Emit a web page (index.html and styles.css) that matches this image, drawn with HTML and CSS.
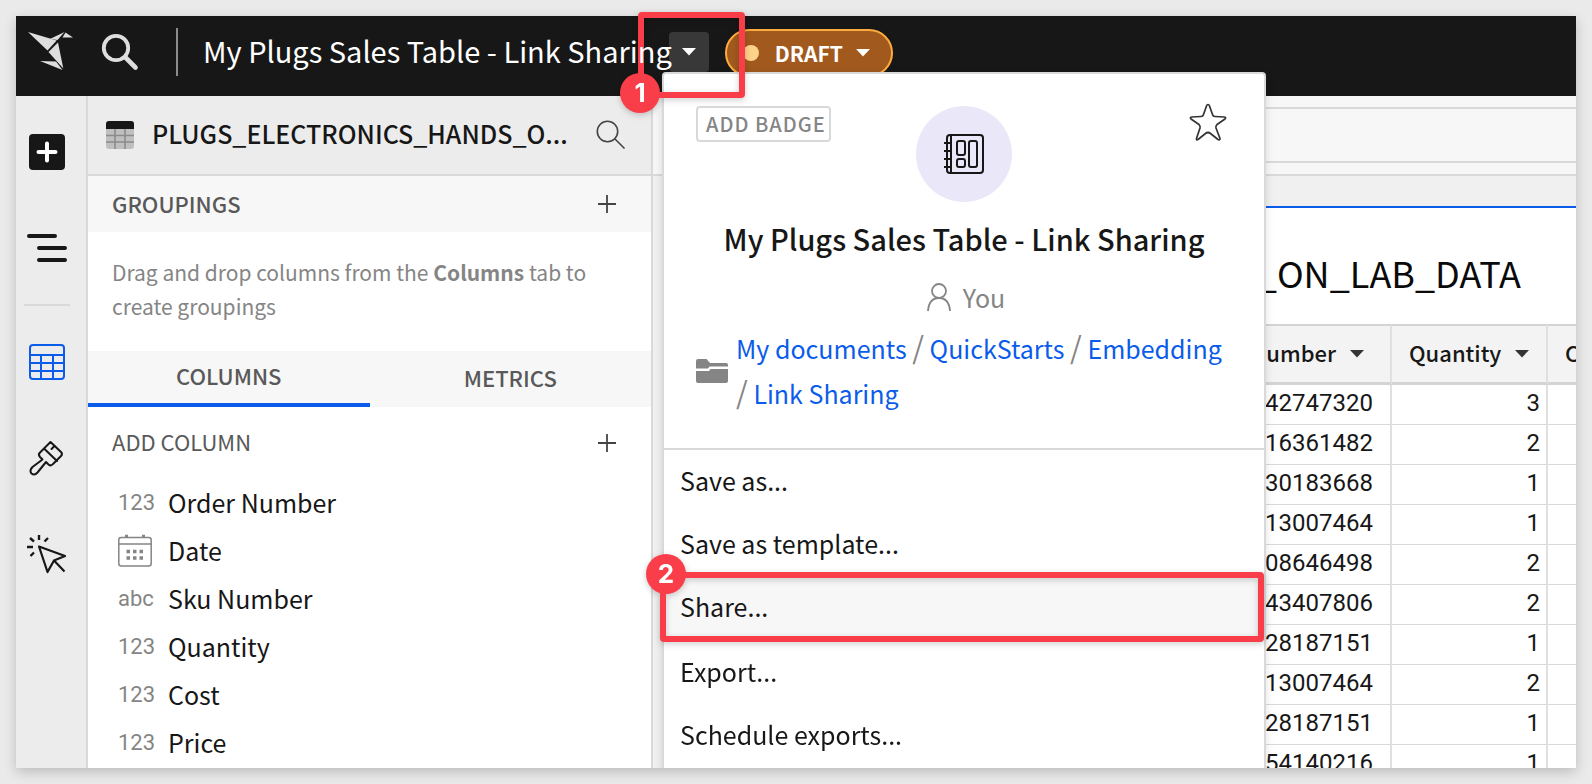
FILE: index.html
```html
<!DOCTYPE html>
<html lang="en">
<head>
<meta charset="utf-8">
<title>My Plugs Sales Table - Link Sharing</title>
<link rel="stylesheet" href="styles.css">
</head>
<body>
<div class="frame">
  <div class="app">
    <header class="topbar">
      <a class="logo" href="#" aria-label="Home">
        <svg width="46" height="40" viewBox="0 0 46 40" fill="#dedede"><path d="M0 0 28.700 8.500 19.500 18.500Z"/><path d="M22 7 36.500 0 29.500 8Z"/><path d="M37.500 .5 45 5.500 34.500 5.500Z"/><path d="M30 10.500 35.300 36.500 20.500 20Z"/><path d="M12 29 28 29.500 34.500 38Z"/></svg>
      </a>
      <button class="icon-button top-search" aria-label="Search">
        <svg width="38" height="38" viewBox="0 0 38 38" fill="none" stroke="#dedede"><circle cx="15" cy="15" r="12.200" stroke-width="3.800"/><path d="m24.500 24.500 10 10" stroke-width="4.600" stroke-linecap="round"/></svg>
      </button>
      <span class="top-divider"></span>
      <span class="doc-name">My Plugs Sales Table - Link Sharing</span>
      <button class="icon-button doc-caret" aria-label="Document menu">
        <svg width="14" height="8" viewBox="0 0 14 8"><path d="M0 0h14L7 7.500z" fill="#fff"/></svg>
      </button>
      <button class="draft"><span class="draft-dot"></span>DRAFT
        <svg width="14" height="8" viewBox="0 0 14 8"><path d="M0 0h14L7 7.500z" fill="#fff"/></svg>
      </button>
    </header>

    <div class="workspace">
      <nav class="rail">
        <button class="icon-button rail-item" aria-label="Add element">
          <svg width="36" height="36" viewBox="0 0 36 36"><rect width="36" height="36" rx="4" fill="#171717"/><path d="M18 9.500v17M9.500 18h17" stroke="#fff" stroke-width="4" stroke-linecap="round"/></svg>
        </button>
        <button class="icon-button rail-item" aria-label="Outline">
          <svg width="40" height="28" viewBox="0 0 40 28" stroke="#171717" stroke-width="4" stroke-linecap="round"><path d="M2 2h26M12 14h26M12 26h26"/></svg>
        </button>
        <span class="rail-divider"></span>
        <button class="icon-button rail-item" aria-label="Table">
          <svg width="36" height="36" viewBox="0 0 36 36" fill="none" stroke="#0b5cea" stroke-width="2"><rect x="1" y="1" width="34" height="34" rx="3"/><path d="M1 11h34M1 19h34M1 27h34M12 11v24M24 11v24"/></svg>
        </button>
        <button class="icon-button rail-item" aria-label="Format">
          <svg width="36" height="36" viewBox="0 0 36 36" fill="none" stroke="#171717" stroke-width="2" stroke-linejoin="round" stroke-linecap="round"><path d="M21.500 2 32 12Q34 14 32 16L24 24Q22 26.500 19.500 24.500L17 22 8.500 32.500Q5.500 36 2.500 33.500 0 30.500 3.500 27L13.500 19.500 11 17Q8.800 14.500 11 12.500Z"/><path d="M15.500 9 28 21M25.500 6 22.500 9"/></svg>
        </button>
        <button class="icon-button rail-item" aria-label="Actions">
          <svg width="40" height="40" viewBox="0 0 40 40" fill="none" stroke="#171717" stroke-width="2.200" stroke-linejoin="round"><path d="M12 12.500 38 22 27 26.500 20.500 38Z"/><path d="m27 26.500 10.500 11"/><path d="M12 1v5M3 4l4 3.500M21 4l-3.500 3.500M0 13h6M3.500 22 7 18.500" stroke-width="2.400"/></svg>
        </button>
      </nav>

      <aside class="panel">
        <div class="panel-head">
          <svg width="28" height="28" viewBox="0 0 28 28"><rect width="28" height="28" rx="3" fill="#bfbfbf"/><path d="M0 14.500h28M0 21h28M9 8v20M19 8v20" stroke="#8c8c8c" stroke-width="1.600"/><path d="M0 8V3q0-3 3-3h22q3 0 3 3v5z" fill="#171717"/></svg>
          <h2 class="panel-title">PLUGS_ELECTRONICS_HANDS_O...</h2>
          <button class="icon-button" aria-label="Search columns">
            <svg width="30" height="30" viewBox="0 0 30 30" fill="none" stroke="#444" stroke-width="1.600"><circle cx="11.500" cy="11.500" r="10.200"/><path d="m18.500 18.500 10 10"/></svg>
          </button>
        </div>
        <div class="section-head">
          <span class="section-name">GROUPINGS</span>
          <button class="icon-button" aria-label="Add grouping"><svg width="18" height="18" viewBox="0 0 18 18" stroke="#444" stroke-width="1.800"><path d="M9 0v18M0 9h18"/></svg></button>
        </div>
        <p class="hint">Drag and drop columns from the <b>Columns</b> tab to create groupings</p>
        <div class="tabs" role="tablist">
          <button class="tab tab-active" role="tab" aria-selected="true">COLUMNS</button>
          <button class="tab" role="tab" aria-selected="false">METRICS</button>
        </div>
        <div class="add-column">
          <span class="section-name">ADD COLUMN</span>
          <button class="icon-button" aria-label="Add column"><svg width="18" height="18" viewBox="0 0 18 18" stroke="#444" stroke-width="1.800"><path d="M9 0v18M0 9h18"/></svg></button>
        </div>
        <ul class="columns">
          <li><span class="type">123</span>Order Number</li>
          <li><span class="type"><svg width="34" height="32" viewBox="0 0 34 32" fill="none" stroke="#858585" stroke-width="1.500"><rect x=".8" y="2.500" width="32.400" height="28.500" rx="2.500"/><path d="M1 9h32"/><path d="M7 1h3M24 1h3" stroke-width="2.500"/><path d="M8.500 16.500h3.500m3 0h3.500m3 0H25M8.500 23h3.500m3 0h3.500m3 0H25" stroke-width="3.500"/></svg></span>Date</li>
          <li><span class="type">abc</span>Sku Number</li>
          <li><span class="type">123</span>Quantity</li>
          <li><span class="type">123</span>Cost</li>
          <li><span class="type">123</span>Price</li>
        </ul>
      </aside>

      <main class="main">
        <div class="formula"><div class="formula-box"></div></div>
        <div class="canvas">
          <section class="element">
            <h1 class="element-title">_ON_LAB_DATA</h1>
            <table class="grid">
              <colgroup><col><col class="col-quantity"><col class="col-last"></colgroup>
              <thead>
                <tr>
                  <th class="th-number"><span class="th">umber<svg width="14" height="8" viewBox="0 0 14 8"><path d="M0 0h14L7 7.500z" fill="#333"/></svg></span></th>
                  <th><span class="th">Quantity<svg width="14" height="8" viewBox="0 0 14 8"><path d="M0 0h14L7 7.500z" fill="#333"/></svg></span></th>
                  <th><span class="th">C</span></th>
                </tr>
              </thead>
              <tbody>
                <tr><td class="number">42747320</td><td>3</td><td></td></tr>
                <tr><td class="number">16361482</td><td>2</td><td></td></tr>
                <tr><td class="number">30183668</td><td>1</td><td></td></tr>
                <tr><td class="number">13007464</td><td>1</td><td></td></tr>
                <tr><td class="number">08646498</td><td>2</td><td></td></tr>
                <tr><td class="number">43407806</td><td>2</td><td></td></tr>
                <tr><td class="number">28187151</td><td>1</td><td></td></tr>
                <tr><td class="number">13007464</td><td>2</td><td></td></tr>
                <tr><td class="number">28187151</td><td>1</td><td></td></tr>
                <tr><td class="number">54140216</td><td>1</td><td></td></tr>
              </tbody>
            </table>
          </section>
        </div>
      </main>
    </div>

    <div class="popover">
      <div class="summary">
        <div class="summary-top">
          <button class="badge-button">ADD BADGE</button>
          <span class="avatar">
            <svg width="40" height="40" viewBox="0 0 40 40" fill="none" stroke="#171717" stroke-width="2"><rect x="3" y="1" width="36" height="38" rx="3"/><path d="M7 1v38M0 9h7M0 17h7M0 25h7M0 33h7"/><rect x="13" y="7" width="8" height="14" rx="2"/><rect x="25" y="7" width="8" height="26" rx="2"/><rect x="13" y="25" width="8" height="8" rx="2"/></svg>
          </span>
          <button class="icon-button star" aria-label="Favorite">
            <svg width="38" height="38" viewBox="0 0 38 38" fill="none" stroke="#333" stroke-width="1.700" stroke-linejoin="round"><path d="M19 1.500Q20 1.500 20.500 3L23.500 11.500Q24 13.500 26 13.500L35.500 14Q37.500 14.500 36 16L28 21.500Q26.500 23 27 25L31 35.500Q31 37.500 29 36.500L21.500 30.500Q19 28.500 16.500 30.500L9 36.500Q7 37.500 7.500 35.500L11 25Q11.500 23 10 21.500L2 16Q.5 14.500 2.500 14L12 13.500Q14 13.500 14.500 11.500L17.500 3Q18 1.500 19 1.500Z"/></svg>
          </button>
        </div>
        <h2 class="summary-title">My Plugs Sales Table - Link Sharing</h2>
        <div class="owner">
          <svg width="24" height="28" viewBox="0 0 24 28" fill="none" stroke="#858585" stroke-width="1.800"><circle cx="12" cy="8" r="7"/><path d="M1 28Q2 15 12 15T23 28"/></svg>
          <span>You</span>
        </div>
        <div class="path">
          <svg width="32" height="24" viewBox="0 0 32 24" fill="#858585"><path d="M0 9.500V2q0-2 2-2h8.500l3.500 4h16q2 0 2 2v1.500H13.500l-1.500 2z"/><path d="M0 12h13l1.500-2H32v12q0 2-2 2H2q-2 0-2-2z"/></svg>
          <div class="crumbs"><a href="#">My documents</a> <span class="slash">/</span> <a href="#">QuickStarts</a> <span class="slash">/</span> <a href="#">Embedding</a> <span class="slash">/</span> <a href="#">Link Sharing</a></div>
        </div>
      </div>
      <div class="menu">
        <div class="menu-group">
          <button class="menu-item">Save as...</button>
          <button class="menu-item">Save as template...</button>
          <button class="menu-item menu-item-active">Share...<span class="callout callout-share"><span class="callout-number">2</span></span></button>
        </div>
        <div class="menu-group">
          <button class="menu-item">Export...</button>
          <button class="menu-item">Schedule exports...</button>
        </div>
      </div>
    </div>
  </div>
  <div class="callout callout-caret"><span class="callout-number">1</span></div>
</div>
</body>
</html>
```
FILE: styles.css
```css
* { box-sizing: border-box; }

body {
  margin: 0;
  background: #eaeaea;
  color: #171717;
  font: 25px/34px "Noto Sans CJK SC", "Noto Sans", sans-serif;
}

h1, h2, p, ul { margin: 0; padding: 0; }
ul { list-style: none; }
svg { display: block; flex: none; overflow: visible; }

button {
  margin: 0;
  padding: 0;
  border: 0;
  background: none;
  color: inherit;
  font: inherit;
  cursor: pointer;
}

a { color: #0b5cea; text-decoration: none; }

.icon-button { display: flex; align-items: center; justify-content: center; }

.frame {
  position: relative;
  display: flex;
  height: 100vh;
  padding: 16px;
}

.app {
  position: relative;
  display: flex;
  flex: 1;
  flex-direction: column;
  min-width: 0;
  overflow: hidden;
  background: #fff;
  box-shadow: 0 4px 12px rgba(0, 0, 0, .2);
}

/* Top bar */
.topbar {
  display: flex;
  flex: none;
  align-items: center;
  height: 80px;
  padding: 0 12px 8px;
  background: #171717;
  color: #fff;
}
.logo { width: 73px; }
.top-search { width: 38px; margin-right: 37px; }
.top-divider { width: 2px; height: 48px; margin-right: 25px; background: #8c8c8c; }
.doc-name {
  z-index: 1;
  padding-bottom: 4px;
  font-size: 29px;
  line-height: 40px;
  white-space: nowrap;
}
.doc-caret {
  width: 40px;
  height: 40px;
  margin: 0 16px 0 -3px;
  border-radius: 4px;
  background: #383838;
}
.draft {
  display: flex;
  align-items: center;
  height: 48px;
  margin-top: 2px;
  padding: 0 21px 0 16px;
  border: 2px solid #ffac3e;
  border-radius: 24px;
  background: #a1591e;
  font-size: 21px;
  font-weight: 700;
  line-height: 32px;
}
.draft-dot { width: 16px; height: 16px; margin-right: 16px; border-radius: 50%; background: #ffd28a; }
.draft svg { margin-left: 13px; }

/* Body */
.workspace { display: flex; flex: 1; min-height: 0; }

.rail {
  display: flex;
  flex: none;
  flex-direction: column;
  gap: 48px;
  width: 72px;
  padding: 32px 16px 0 8px;
  border-right: 2px solid #d9d9d9;
  background: #ececec;
}
.rail-item { height: 48px; }
.rail-divider { height: 2px; margin: -16px 0; background: #d9d9d9; }

.panel {
  flex: none;
  width: 565px;
  border-right: 2px solid #d9d9d9;
}
.panel-head {
  display: flex;
  align-items: center;
  height: 80px;
  padding: 0 25px 1px 18px;
  border-bottom: 2px solid #d9d9d9;
  background: #ececec;
}
.panel-title {
  flex: 1;
  padding-bottom: 4px;
  margin-left: 18px;
  font-size: 25px;
  font-weight: 500;
  white-space: nowrap;
}
.section-head, .add-column {
  display: flex;
  align-items: center;
  justify-content: space-between;
  height: 56px;
  padding: 0 35px 0 24px;
  color: #595959;
  font-size: 22px;
}
.section-name { padding-bottom: 3px; }
.section-head { background: #f7f7f7; font-weight: 500; }
.add-column { height: 73px; padding-bottom: 2px; }
.hint { padding: 23px 48px 28px 24px; color: #858585; font-size: 21px; }
.tabs { display: grid; grid-template-columns: 1fr 1fr; height: 56px; background: #f7f7f7; }
.tab { padding-bottom: 4px; color: #595959; font-size: 22px; font-weight: 500; }
.tab-active { border-bottom: 4px solid #0b5cea; }
.columns li { display: flex; align-items: center; height: 48px; padding: 0 0 4px 30px; }
.type { width: 50px; padding-top: 2px; color: #858585; font: 22px/32px Roboto, sans-serif; }

/* Main area */
.main { display: flex; flex: 1; flex-direction: column; min-width: 0; }
.formula { flex: none; padding: 11px 0 11px 24px; border-bottom: 2px solid #d9d9d9; background: #f7f7f7; }
.formula-box { height: 56px; border: 2px solid #d9d9d9; border-right: 0; }
.canvas { flex: 1; min-height: 0; padding: 30px 0 0 24px; background: #f0f0f0; }
.element { height: 100%; border-top: 2px solid #0b5cea; background: #fff; overflow: hidden; }
.element-title {
  padding: 39px 55px 27px 0;
  color: #0a0a0a;
  font-size: 36px;
  font-weight: 400;
  line-height: 50px;
  text-align: right;
}
.grid { width: 100%; border-collapse: separate; border-spacing: 0; table-layout: fixed; }
.col-quantity { width: 156px; }
.col-last { width: 28px; }
.grid th {
  height: 61px;
  padding: 0 0 4px 17px;
  border-top: 2px solid #d4d4d4;
  border-right: 2px solid #e0e0e0;
  border-bottom: 3px solid #d4d4d4;
  background: #f3f3f3;
  font-size: 22px;
  font-weight: 500;
}
.th { display: flex; align-items: center; gap: 14px; }
.th svg { margin-top: 4px; }
.th-number .th { justify-content: flex-end; padding-right: 26px; }
.grid td {
  height: 40px;
  padding: 0 6px 4px 0;
  border-right: 2px solid #e0e0e0;
  border-bottom: 1px solid #d9d9d9;
  font: 24px/32px Roboto, sans-serif;
  text-align: right;
}
.grid .number { padding-right: 17px; }
.grid th:last-child, .grid td:last-child { border-right: 0; }

/* Document popover */
.popover {
  position: absolute;
  top: 56px;
  left: 646px;
  width: 604px;
  border: 2px solid #d9d9d9;
  border-radius: 4px;
  background: #fff;
  box-shadow: 0 2px 8px rgba(0, 0, 0, .12);
}
.summary { padding: 32px; border-bottom: 2px solid #d9d9d9; }
.summary-top { display: grid; grid-template-columns: 1fr auto 1fr; align-items: start; }
.badge-button {
  justify-self: start;
  height: 36px;
  padding: 0 3px 0 8px;
  border: 2px solid #d9d9d9;
  border-radius: 4px;
  color: #858585;
  font-size: 20px;
  font-weight: 500;
  letter-spacing: 1px;
  line-height: 32px;
}
.avatar {
  display: flex;
  align-items: center;
  justify-content: center;
  width: 96px;
  height: 96px;
  border-radius: 50%;
  background: #e9e7f8;
}
.star { justify-self: end; width: 48px; height: 32px; }
.summary-title { margin-top: 16px; font-size: 29px; font-weight: 500; line-height: 40px; text-align: center; }
.owner {
  display: flex;
  align-items: center;
  justify-content: center;
  gap: 12px;
  margin-top: 22px;
  padding-left: 4px;
  color: #858585;
}
.path { display: flex; align-items: center; gap: 8px; margin-top: 12px; }
.crumbs { flex: 1; line-height: 45px; }
.slash { color: #858585; font-size: 30px; line-height: 1; }
.menu { display: grid; gap: 2px; padding-bottom: 16px; }
.menu-item {
  position: relative;
  display: block;
  width: 100%;
  height: 63px;
  padding: 0 16px 4px;
  text-align: left;
}
.menu-item-active { background: #f7f7f7; }

/* Numbered callouts */
.callout {
  position: absolute;
  border: 6px solid #f93e49;
  border-radius: 4px;
  filter: drop-shadow(0 2px 3px rgba(0, 0, 0, .2));
  pointer-events: none;
}
.callout-caret { top: 12px; left: 638px; width: 107px; height: 86px; }
.callout-share { top: -4px; right: 0; bottom: -3px; left: -4px; }
.callout-number {
  position: absolute;
  width: 40px;
  height: 40px;
  border-radius: 50%;
  background: #f93e49;
  color: #fff;
  font: 700 26px/40px Inter, sans-serif;
  text-align: center;
}
.callout-caret .callout-number { bottom: -21px; left: -24px; }
.callout-share .callout-number { top: -24px; left: -20px; }
```
